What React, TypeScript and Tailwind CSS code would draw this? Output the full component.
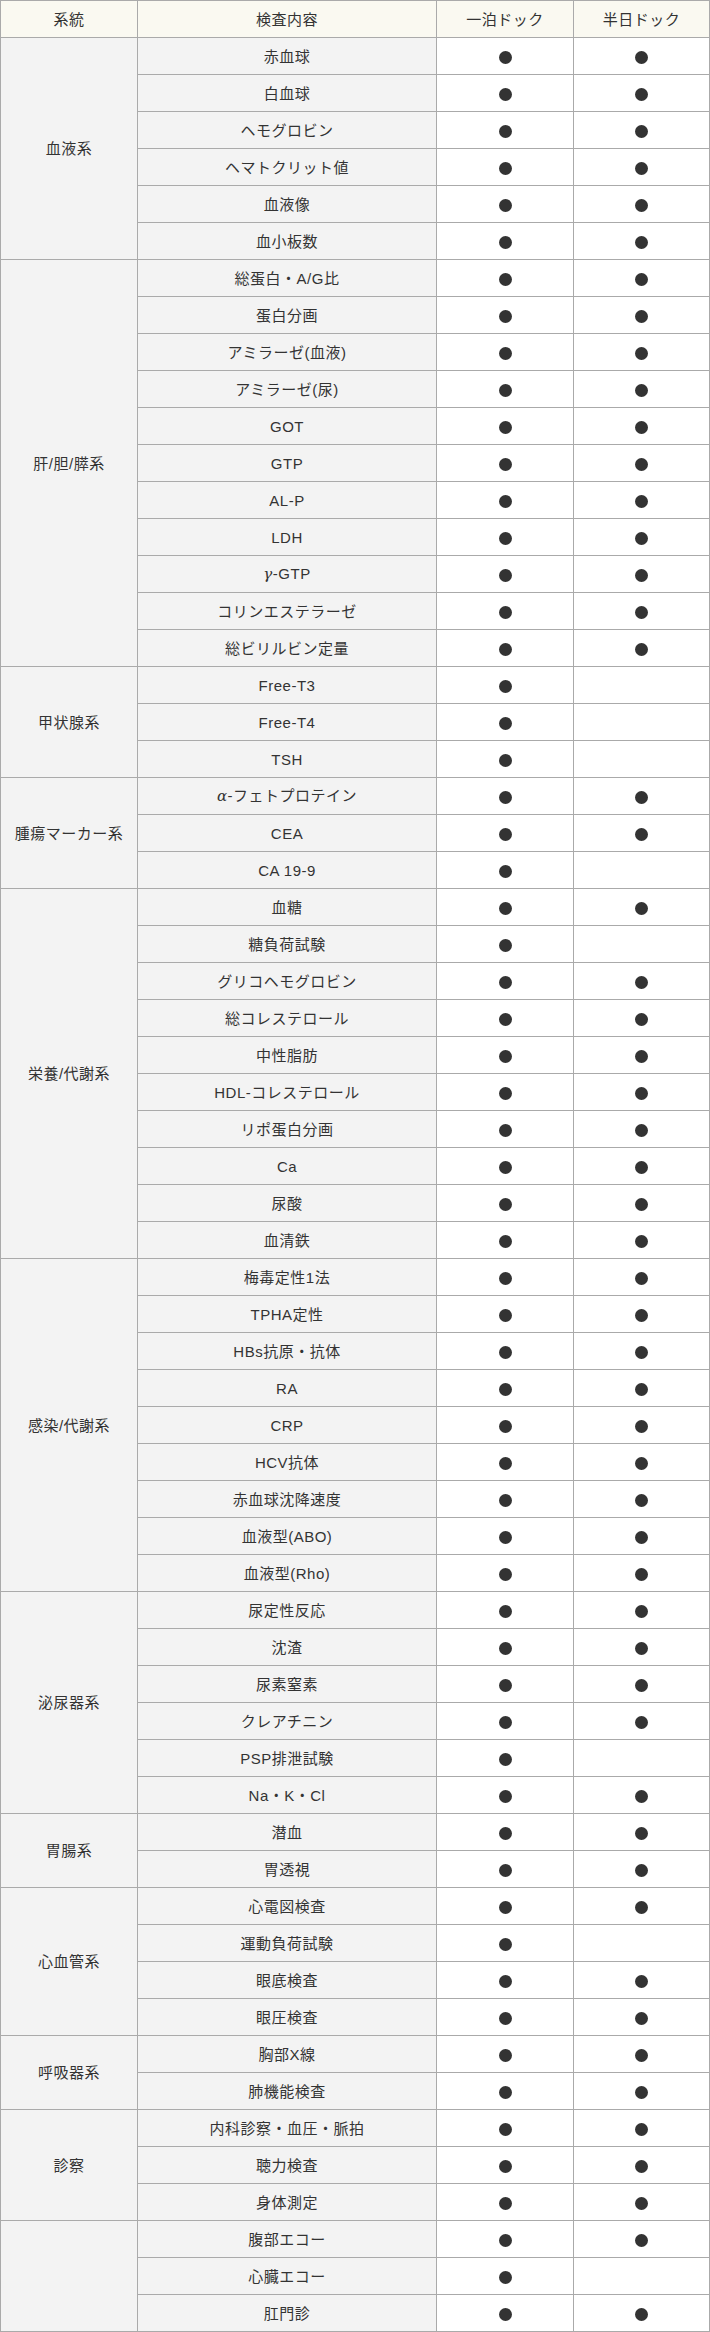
type Item = { name: string; half: boolean }
type Group = { system: string; items: Item[] }

const all = (...names: string[]): Item[] => names.map((name) => ({ name, half: true }))
const oneNight = (name: string): Item => ({ name, half: false })

const GROUPS: Group[] = [
  { system: '血液系', items: all('赤血球', '白血球', 'ヘモグロビン', 'ヘマトクリット値', '血液像', '血小板数') },
  {
    system: '肝/胆/膵系',
    items: all('総蛋白・A/G比', '蛋白分画', 'アミラーゼ(血液)', 'アミラーゼ(尿)', 'GOT', 'GTP', 'AL-P', 'LDH', 'γ-GTP', 'コリンエステラーゼ', '総ビリルビン定量'),
  },
  { system: '甲状腺系', items: [oneNight('Free-T3'), oneNight('Free-T4'), oneNight('TSH')] },
  { system: '腫瘍マーカー系', items: [...all('α-フェトプロテイン', 'CEA'), oneNight('CA 19-9')] },
  {
    system: '栄養/代謝系',
    items: [
      ...all('血糖'),
      oneNight('糖負荷試験'),
      ...all('グリコヘモグロビン', '総コレステロール', '中性脂肪', 'HDL-コレステロール', 'リポ蛋白分画', 'Ca', '尿酸', '血清鉄'),
    ],
  },
  {
    system: '感染/代謝系',
    items: all('梅毒定性1法', 'TPHA定性', 'HBs抗原・抗体', 'RA', 'CRP', 'HCV抗体', '赤血球沈降速度', '血液型(ABO)', '血液型(Rho)'),
  },
  {
    system: '泌尿器系',
    items: [...all('尿定性反応', '沈渣', '尿素窒素', 'クレアチニン'), oneNight('PSP排泄試験'), ...all('Na・K・Cl')],
  },
  { system: '胃腸系', items: all('潜血', '胃透視') },
  { system: '心血管系', items: [...all('心電図検査'), oneNight('運動負荷試験'), ...all('眼底検査', '眼圧検査')] },
  { system: '呼吸器系', items: all('胸部X線', '肺機能検査') },
  { system: '診察', items: all('内科診察・血圧・脈拍', '聴力検査', '身体測定') },
  { system: '', items: [...all('腹部エコー'), oneNight('心臓エコー'), ...all('肛門診')] },
]

const cell = 'h-[37px] border border-[#aaaaaa] p-0 text-center align-middle'

function Label({ text }: { text: string }) {
  const greek = /^[αγ]/.test(text)
  if (!greek) return <>{text}</>
  return (
    <>
      <span className="italic" style={{ fontFamily: '"DejaVu Serif", serif' }}>
        {text[0]}
      </span>
      {text.slice(1)}
    </>
  )
}

function Dot() {
  return <span className="inline-block h-[13px] w-[13px] rounded-full bg-[#333333] align-middle" />
}

export default function App() {
  return (
    <div
      className="w-[710px] bg-white text-[15px] leading-none tracking-[0.5px] text-[#333333]"
      style={{ fontFamily: '"Liberation Sans", "Noto Sans CJK JP", sans-serif' }}
    >
      <table className="w-[710px] table-fixed border-collapse">
        <colgroup>
          <col className="w-[137px]" />
          <col className="w-[299px]" />
          <col className="w-[137px]" />
          <col />
        </colgroup>
        <thead>
          <tr className="bg-[#faf9f1]">
            <th className={`${cell} font-normal`}>系統</th>
            <th className={`${cell} font-normal`}>検査内容</th>
            <th className={`${cell} font-normal`}>一泊ドック</th>
            <th className={`${cell} font-normal`}>半日ドック</th>
          </tr>
        </thead>
        <tbody>
          {GROUPS.map((group) =>
            group.items.map((item, index) => (
              <tr key={`${group.system}-${item.name}`}>
                {index === 0 && (
                  <td rowSpan={group.items.length} className={`${cell} bg-[#f3f3f3]`}>
                    {group.system}
                  </td>
                )}
                <td className={`${cell} bg-[#f3f3f3]`}>
                  <Label text={item.name} />
                </td>
                <td className={`${cell} bg-white`}>
                  <Dot />
                </td>
                <td className={`${cell} bg-white`}>{item.half && <Dot />}</td>
              </tr>
            )),
          )}
        </tbody>
      </table>
    </div>
  )
}
